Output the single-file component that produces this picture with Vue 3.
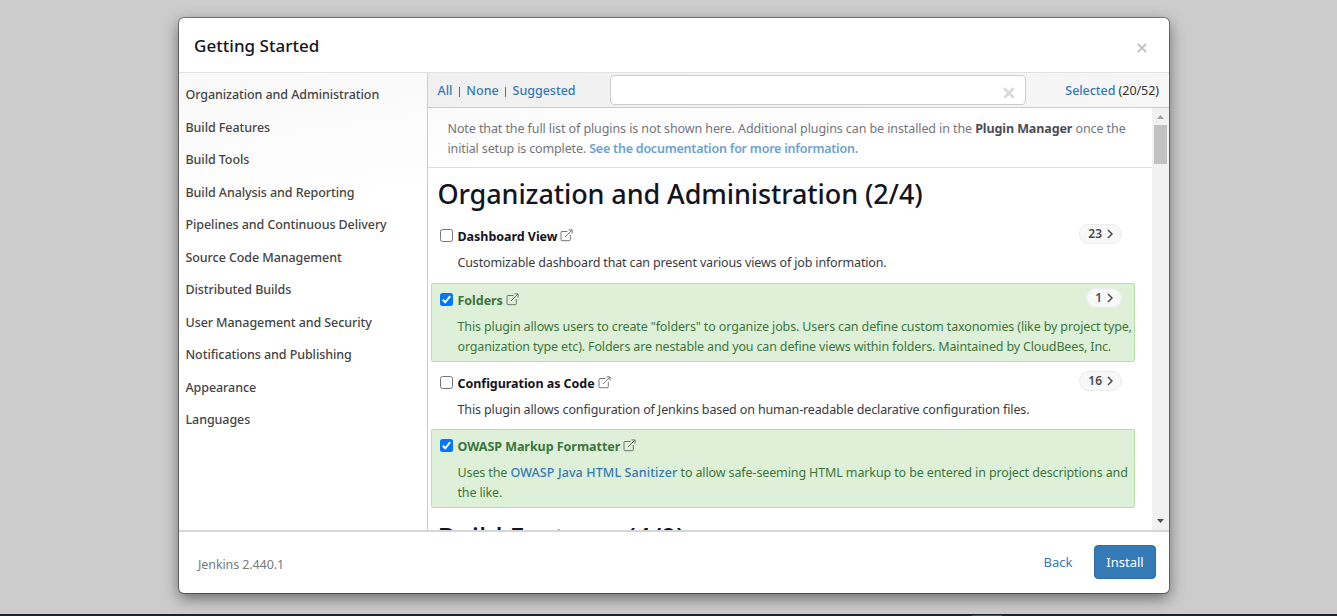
<script setup>
const categories = [
  'Organization and Administration', 'Build Features', 'Build Tools',
  'Build Analysis and Reporting', 'Pipelines and Continuous Delivery',
  'Source Code Management', 'Distributed Builds', 'User Management and Security',
  'Notifications and Publishing', 'Appearance', 'Languages',
]

const plugins = [
  { id: 'dash', name: 'Dashboard View', count: 23, checked: false, lines: [[{ t: 'Customizable dashboard that can present various views of job information.' }]] },
  { id: 'folders', name: 'Folders', count: 1, checked: true, lines: [
    [{ t: 'This plugin allows users to create "folders" to organize jobs. Users can define custom taxonomies (like by project type,' }],
    [{ t: 'organization type etc). Folders are nestable and you can define views within folders. Maintained by CloudBees, Inc.' }],
  ] },
  { id: 'casc', name: 'Configuration as Code', count: 16, checked: false, lines: [[{ t: 'This plugin allows configuration of Jenkins based on human-readable declarative configuration files.' }]] },
  { id: 'owasp', name: 'OWASP Markup Formatter', count: 0, checked: true, lines: [
    [{ t: 'Uses the ' }, { t: 'OWASP Java HTML Sanitizer', link: true }, { t: ' to allow safe-seeming HTML markup to be entered in project descriptions and' }],
    [{ t: 'the like.' }],
  ] },
]
</script>

<template>
  <div class="screen">
    <div class="modal">
      <header class="head">
        <h4>Getting Started</h4>
        <svg class="close" width="10" height="10" viewBox="0 0 10 10"><path d="M1 1L9 9M9 1L1 9" /></svg>
      </header>

      <div class="body">
        <nav class="side">
          <a v-for="c in categories" :key="c" class="cat">{{ c }}</a>
        </nav>
        <section class="main">
          <div class="bar">
            <div class="picks"><a>All</a><i></i><a>None</a><i></i><a>Suggested</a></div>
            <div class="search">
              <svg width="12" height="12" viewBox="0 0 12 12"><path d="M1.3 1.3L10.7 10.7M10.7 1.3L1.3 10.7" /></svg>
            </div>
            <div class="selected"><a>Selected</a> (20/52)</div>
          </div>
          <div class="scroll">
            <div class="list">
              <div class="note">
                <div class="n1">Note that the full list of plugins is not shown here. Additional plugins can be installed in the <b>Plugin Manager</b> once the</div>
                <div class="n2">initial setup is complete. <a>See the documentation for more information.</a></div>
              </div>
              <h2>Organization and Administration (2/4)</h2>
              <div v-for="p in plugins" :key="p.id" class="plugin" :class="[p.id, { on: p.checked }]">
                <div class="title">
                  <span class="box">
                    <svg v-if="p.checked" width="13" height="13" viewBox="0 0 13 13"><path d="M2.8 6.8L5.2 9.3L10.2 3.2" /></svg>
                  </span>
                  <span class="name">{{ p.name }}</span>
                  <svg class="ext" width="13" height="13" viewBox="0 0 13 13"><path d="M7.5 2.5H2Q1 2.5 1 3.5V10.7Q1 11.7 2 11.7H9.3Q10.3 11.7 10.3 10.7V6M5 8L12 1M8.5 .9H12.1V4.5" /></svg>
                  <span v-if="p.count" class="badge">{{ p.count }}<svg width="6" height="10" viewBox="0 0 6 10"><path d="M1 1L5 5L1 9" /></svg></span>
                </div>
                <div v-for="(line, i) in p.lines" :key="i" class="line" :class="'l' + i"><template v-for="(s, j) in line" :key="j"><a v-if="s.link">{{ s.t }}</a><template v-else>{{ s.t }}</template></template></div>
              </div>
              <h2 class="next">Build Features (4/9)</h2>
            </div>
            <div class="track">
              <svg width="7" height="4" viewBox="0 0 7 4"><path d="M0 4L3.5 0L7 4Z" fill="#a3a3a3" /></svg>
              <div class="thumb"></div>
              <svg class="down" width="7" height="4" viewBox="0 0 7 4"><path d="M0 0L3.5 4L7 0Z" fill="#505050" /></svg>
            </div>
          </div>
        </section>
      </div>

      <footer class="foot">
        <span class="ver">Jenkins 2.440.1</span>
        <a class="back">Back</a>
        <button>Install</button>
      </footer>
    </div>
    <div class="taskbar"><span></span></div>
  </div>
</template>

<style>
body { margin: 0; overflow: hidden; }
</style>

<style scoped>
* { box-sizing: border-box; }
.screen {
  height: 616px; background: #ccc; overflow: hidden;
  display: flex; flex-direction: column; justify-content: space-between;
  font: 13px/20px "Noto Sans", "Open Sans", sans-serif; color: #14141f; white-space: nowrap;
}
svg { fill: none; stroke: currentColor; flex: none; }
a { color: #337ab7; font-weight: 500; }
.modal {
  width: 990px; height: 575px; margin: 18px 0 0 179px; background: #fff; border-radius: 5px;
  box-shadow: 0 0 0 1px rgba(0,0,0,.38), 0 5px 15px rgba(0,0,0,.5);
  display: flex; flex-direction: column; overflow: hidden;
}
.head {
  height: 55px; flex: none; border-bottom: 1px solid #e2e2e2; padding: 0 22px 0 15px;
  display: flex; align-items: center; justify-content: space-between;
}
h4 { margin: 1px 0 0; font-size: 17px; font-weight: 500; letter-spacing: .03px; }
.close { color: #c4c4c4; stroke-width: 2; margin-top: 5px; }
.body { height: 457px; flex: none; display: flex; }
.side {
  width: 249px; flex: none; border-right: 1px solid #ccc; padding: 6px 0 0 6.5px;
  background: linear-gradient(172deg, #f8f8f8, #fff 32%);
  display: flex; flex-direction: column; color: #4b4b4b;
}
.cat { height: 32.5px; line-height: 32.5px; color: #444; font-size: 12.5px; font-weight: 500; letter-spacing: -.08px; }
.main { width: 741px; display: flex; flex-direction: column; }
.bar {
  height: 35px; flex: none; background: linear-gradient(90deg, #f0f0f0, #f6f6f6); border-bottom: 1px solid #ccc;
  display: flex; align-items: center; padding: 0 10px 0 9.5px;
}
.bar a { font-weight: 500; font-size: 12.5px; }
.picks { width: 172.5px; display: flex; align-items: center; letter-spacing: -.03px; margin-top: 2px; }
.picks i { width: 1px; height: 10px; background: #337ab7; margin: 2px 6.5px 0 6.5px; }
.search {
  width: 416px; height: 30px; border: 1px solid #ccc; border-radius: 4px; background: #fff;
  display: flex; justify-content: flex-end; padding: 11px 10px 0 0; color: #d9d9d9;
}
.search svg { stroke-width: 2.8; }
.selected { margin: 2px 0 0 auto; font-size: 12.5px; letter-spacing: -.05px; color: #333; }
.scroll { height: 422px; display: flex; }
.list { width: 724px; height: 422px; overflow: hidden; }
.note { height: 60px; border-bottom: 1px solid #ddd; padding: 11px 0 0 19.5px; color: #74747c; font-size: 12.5px; background: linear-gradient(175deg, #fafafa, #fff 50%); }
.note b { color: #4c4c55; }
.note a { color: #6ba2d2; font-weight: 600; letter-spacing: -.22px; }
.n1 { letter-spacing: -.095px; }
.n2 { letter-spacing: -.14px; }
h2 { margin: 7px 0 0 9.5px; height: 37px; font-size: 27px; line-height: 37px; font-weight: 500; letter-spacing: -.1px; }
.plugin { width: 704px; height: 59px; margin: 0 0 4px 3px; padding: 7px 0 0 8px; border: 1px solid transparent; border-radius: 2px; }
h2 + .plugin { margin-top: 7px; height: 60px; }
.plugin.on { height: 79px; background: #dff0d8; border-color: #b9dfa8; color: #3c763d; }
.title { height: 20px; display: flex; align-items: center; }
.box { width: 13px; height: 13px; border: 1px solid #767676; border-radius: 2.5px; background: #fff; margin: -3px 4.5px 0 0; }
.on .box { border: 0; background: #0075ff; color: #fff; display: flex; }
.box svg { stroke-width: 2; }
.name { font-weight: 700; font-size: 12.5px; letter-spacing: -.04px; }
.ext { margin: -3px 0 0 3px; color: #666; stroke-width: .9; }
.badge {
  height: 20px; margin: -6px 12px 0 auto; border-radius: 10px; border: 1px solid #ebebeb; background: #f8f8f8; padding: 0 8px;
  color: #4a4a4a; font-size: 12px; font-weight: 600; display: flex; align-items: center; gap: 5px;
}
.badge svg { stroke-width: 1.5; }
.line { margin-left: 17.5px; height: 19.5px; line-height: 20px; font-size: 12.5px; color: #3a3a42; letter-spacing: -.15px; }
.l0 { margin-top: 6px; }
.l1 { line-height: 19px; }
.owasp .l1 { line-height: 20px; }
.folders .l0, .casc .l0 { letter-spacing: -.13px; }
.owasp .l0 { letter-spacing: -.12px; }
.owasp a { letter-spacing: .11px; }
.on .line { color: #3c763d; }
.plugin + h2.next { margin-top: 11px; letter-spacing: -.15px; }
.track { width: 17px; background: #f1f1f1; display: flex; flex-direction: column; align-items: center; padding-top: 7px; }
.track svg { stroke: none; }
.thumb { width: 13px; height: 39px; background: #c1c1c1; margin-top: 6px; }
.track .down { margin: auto 0 7px; }
.foot { flex: 1; border-top: 2px solid #d6d6d6; display: flex; align-items: center; padding: 0 13px 2px 19px; }
.ver { color: #77777f; font-size: 12.5px; letter-spacing: -.1px; margin-top: 6px; }
.back { margin-left: auto; margin-right: 21.5px; font-weight: 400; }
button {
  width: 62px; height: 34px; border: 1px solid #2e6da4; border-radius: 4px; background: #337ab7; color: #fff;
  font: 13px/20px "Noto Sans", sans-serif; padding: 0;
}
.taskbar { height: 2px; background: #1c232d; flex: none; }
.taskbar span { display: block; width: 30px; height: 1px; margin: 0 0 0 972px; background: #4a4f57; transform: translateY(1px); }
</style>
